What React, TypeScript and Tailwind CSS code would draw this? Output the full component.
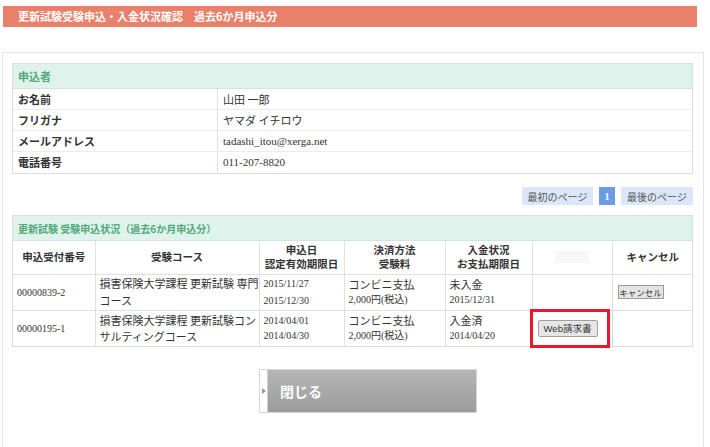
export default function App() {
  const serif = "font-['Liberation_Serif','Noto_Sans_CJK_JP',serif]";
  return (
    <div className="w-[710px] h-[447px] bg-white overflow-hidden font-['Noto_Sans_CJK_JP',sans-serif] text-[#333]">
      <div className="mt-[6px] ml-[3px] w-[694px] h-[21px] bg-[#e8806a] flex items-center pl-[15px] text-white text-[11px] font-bold leading-none">
        更新試験受験申込・入金状況確認　過去6か月申込分
      </div>
      <div className="mt-[25px] ml-[2px] w-[702px] h-[400px] border border-[#e4e4e4] pt-[10px] pl-[9px] pr-[10px]">
        {/* Section 1 */}
        <div className="w-[681px] border border-[#dcdcdc]">
          <div className="h-[25px] bg-[#e0f2ec] border-b border-[#d2e4dd] flex items-center pl-[5px] text-[11px] font-bold text-[#4fa97a]">
            申込者
          </div>
          {[
            ["お名前", "山田 一郎", false],
            ["フリガナ", "ヤマダ イチロウ", false],
            ["メールアドレス", "tadashi_itou@xerga.net", true],
            ["電話番号", "011-207-8820", true],
          ].map(([k, v, s], i) => (
            <div key={i} className={`flex h-[21px] ${i < 3 ? "border-b border-[#ececec]" : ""}`}>
              <div className="w-[205px] border-r border-[#e0e0e0] flex items-center pl-[5px] text-[11px] font-bold">{k as string}</div>
              <div className={`flex-1 flex items-center pl-[5px] ${s ? serif + " text-[11px]" : "text-[11px]"}`}>{v as string}</div>
            </div>
          ))}
        </div>

        {/* Pagination */}
        <div className="mt-[13px] w-[681px] flex justify-end gap-[6px] h-[18px]">
          <div className="w-[71px] bg-[#dbe7f8] flex items-center justify-center text-[10px] text-[#555]">最初のページ</div>
          <div className={`w-[16px] bg-[#6c9de4] flex items-center justify-center text-[10px] text-white font-bold ${serif}`}>1</div>
          <div className="w-[72px] bg-[#dbe7f8] flex items-center justify-center text-[10px] text-[#555]">最後のページ</div>
        </div>

        {/* Section 2 */}
        <div className="mt-[10px] w-[681px] border border-[#dcdcdc]">
          <div className="h-[25px] bg-[#e0f2ec] border-b border-[#d2e4dd] flex items-center pl-[5px] text-[10px] font-bold text-[#4fa97a]">
            更新試験 受験申込状況（過去6か月申込分）
          </div>
          <table className="w-full table-fixed border-collapse text-[11px]">
            <colgroup>
              <col className="w-[82px]" />
              <col className="w-[164px]" />
              <col className="w-[85px]" />
              <col className="w-[101px]" />
              <col className="w-[87px]" />
              <col className="w-[80px]" />
              <col className="w-[81px]" />
            </colgroup>
            <thead>
              <tr className="h-[33px] font-bold text-[10.5px] leading-[14px]">
                <th className="border-r border-b border-[#e0e0e0] font-bold">申込受付番号</th>
                <th className="border-r border-b border-[#e0e0e0] font-bold">受験コース</th>
                <th className="border-r border-b border-[#e0e0e0] font-bold">申込日<br />認定有効期限日</th>
                <th className="border-r border-b border-[#e0e0e0] font-bold">決済方法<br />受験料</th>
                <th className="border-r border-b border-[#e0e0e0] font-bold">入金状況<br />お支払期限日</th>
                <th className="border-r border-b border-[#e0e0e0]">
                  <div className="mx-auto w-[34px] h-[12px] bg-[#f7f7f7]"></div>
                </th>
                <th className="border-b border-[#e0e0e0] font-bold">キャンセル</th>
              </tr>
            </thead>
            <tbody>
              <tr className="h-[36px]">
                <td className={`border-r border-b border-[#e0e0e0] pl-[4px] text-[10px] ${serif}`}>00000839-2</td>
                <td className="border-r border-b border-[#e0e0e0] pl-[4px] leading-[17px] text-[11px]">損害保険大学課程 更新試験 専門<br />コース</td>
                <td className={`border-r border-b border-[#e0e0e0] pl-[4px] leading-[17px] text-[10px] ${serif}`}>2015/11/27<br />2015/12/30</td>
                <td className="border-r border-b border-[#e0e0e0] pl-[4px] leading-[16px]">
                  <div className="text-[11px]">コンビニ支払</div>
                  <div className={`text-[10px] ${serif}`}>2,000円(税込)</div>
                </td>
                <td className="border-r border-b border-[#e0e0e0] pl-[4px] leading-[16px]">
                  <div className="text-[11px]">未入金</div>
                  <div className={`text-[10px] ${serif}`}>2015/12/31</div>
                </td>
                <td className="border-r border-b border-[#e0e0e0]"></td>
                <td className="border-b border-[#e0e0e0] pl-[5px]">
                  <div className="w-[46px] h-[14px] bg-[#e4e4e4] border border-[#9a9a9a] flex items-center justify-center text-[8.5px] leading-none whitespace-nowrap">キャンセル</div>
                </td>
              </tr>
              <tr className="h-[36px]">
                <td className={`border-r border-[#e0e0e0] pl-[4px] text-[10px] ${serif}`}>00000195-1</td>
                <td className="border-r border-[#e0e0e0] pl-[4px] leading-[16px] text-[11px]">損害保険大学課程 更新試験コン<br />サルティングコース</td>
                <td className={`border-r border-[#e0e0e0] pl-[4px] leading-[15px] text-[10px] ${serif}`}>2014/04/01<br />2014/04/30</td>
                <td className="border-r border-[#e0e0e0] pl-[4px] leading-[15px]">
                  <div className="text-[11px]">コンビニ支払</div>
                  <div className={`text-[10px] ${serif}`}>2,000円(税込)</div>
                </td>
                <td className="border-r border-[#e0e0e0] pl-[4px] leading-[15px]">
                  <div className="text-[11px]">入金済</div>
                  <div className={`text-[10px] ${serif}`}>2014/04/20</div>
                </td>
                <td className="border-r border-[#e0e0e0] relative">
                  <div className="absolute left-[-3px] top-[-2px] w-[80px] h-[39px] border-[3px] border-[#e8192c]"></div>
                  <div className="ml-[5px] w-[60px] h-[17px] bg-[#e6e6e6] border border-[#a0a0a0] rounded-[2px] flex items-center justify-center text-[9.5px] leading-none font-['Liberation_Sans','Noto_Sans_CJK_JP',sans-serif]">Web請求書</div>
                </td>
                <td></td>
              </tr>
            </tbody>
          </table>
        </div>

        {/* Close button */}
        <div className="mt-[22px] ml-[247px] w-[218px] h-[44px] flex border border-[#d6d6d6]">
          <div className="w-[8px] bg-white border-r border-[#cfcfcf] flex items-center justify-center">
            <svg width="4" height="6" viewBox="0 0 4 6"><path d="M0 0L4 3L0 6Z" fill="#9a9a9a" /></svg>
          </div>
          <div className="flex-1 bg-gradient-to-b from-[#b6b6b6] to-[#9c9c9c] flex items-center pl-[12px] text-white font-bold text-[14px]">
            閉じる
          </div>
        </div>
      </div>
    </div>
  );
}
